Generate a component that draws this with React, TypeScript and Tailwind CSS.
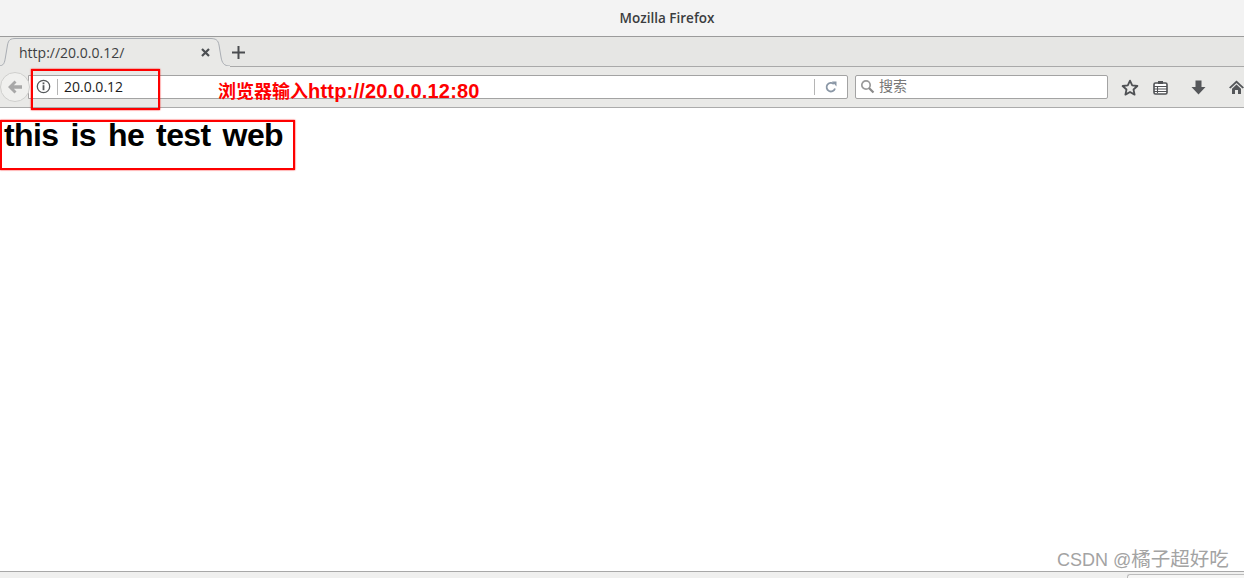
import React from "react";

const sans = "font-['Liberation_Sans','Noto_Sans_CJK_SC',sans-serif]";
const ui = "font-['Open_Sans','Noto_Sans_CJK_SC',sans-serif]";

function Tab() {
  return (
    <div className="relative w-[232px] h-[30px] ml-[-2px] shrink-0">
      <svg className="absolute inset-0" width="232" height="30" viewBox="0 0 232 30" fill="none">
        <path d="M0 29 C6 29 6.5 26 7.5 20 L9.5 8 C10.5 3 12 1.5 18 1.5 L212 1.5 C218 1.5 220 3 221 8 L223 20 C224 26 226 29 232 29" fill="#e9e9e7" stroke="#a9adb3" strokeWidth="1" />
        <rect x="0" y="29" width="232" height="1" fill="#e9e9e7" />
      </svg>
      <div className={`absolute left-[21px] top-[7px] text-[14px] leading-[18px] text-[#3d3f42] ${ui}`}>http://20.0.0.12/</div>
      <svg className="absolute left-[203px] top-[11px]" width="9" height="9" viewBox="0 0 9 9">
        <path d="M1 1 L8 8 M8 1 L1 8" stroke="#4c4f52" strokeWidth="2.2" />
      </svg>
    </div>
  );
}

export default function App() {
  return (
    <div className={`relative w-[1244px] h-[578px] overflow-hidden flex flex-col bg-white ${sans}`}>
      <div className="h-[36px] shrink-0 bg-[#f3f3f3] flex items-center justify-center pl-[90px]">
        <span className={`text-[13.5px] font-semibold text-[#3b3d3f] ${ui}`}>Mozilla Firefox</span>
      </div>
      <div className="h-[31px] shrink-0 border-t border-[#9b9b9b] bg-[#e6e6e4] flex items-start relative">
        <Tab />
        <svg className="ml-[2px] mt-[9px]" width="13" height="13" viewBox="0 0 13 13">
          <path d="M6.5 0 V13 M0 6.5 H13" stroke="#4a4c4f" strokeWidth="2" />
        </svg>
        <div className="absolute left-[230px] right-0 bottom-0 h-px bg-[#a9a9a9]" />
      </div>
      <div className="h-[41px] shrink-0 bg-[#e9e9e7] border-b border-[#ababab] flex items-center relative">
        <div className="w-[30px] h-[30px] shrink-0 rounded-full border border-[#cfcfcd] bg-[#f0f0ee] flex items-center justify-center mt-[-1px] z-10">
          <svg width="16" height="14" viewBox="0 0 16 14">
            <path d="M7.5 0.5 L1 7 L7.5 13.5 L9.5 11.5 L6.8 8.8 H15 V5.2 H6.8 L9.5 2.5 Z" fill="#a8a8a8" />
          </svg>
        </div>
        <div className="ml-[-2px] w-[820px] h-[24px] shrink-0 bg-white border border-[#a3a3a3] rounded-r-[2px] flex items-center mt-[-1px]">
          <svg className="ml-[7px] shrink-0" width="15" height="15" viewBox="0 0 15 15" fill="none">
            <circle cx="7.5" cy="7.5" r="6.2" stroke="#55585b" strokeWidth="1.3" />
            <rect x="6.6" y="3.4" width="1.8" height="1.9" fill="#55585b" />
            <rect x="6.6" y="6.2" width="1.8" height="5" fill="#55585b" />
          </svg>
          <div className="w-px h-[16px] bg-[#b5b5b5] ml-[6px]" />
          <span className={`ml-[6px] text-[14px] text-[#1b1b1b] ${ui}`}>20.0.0.12</span>
          <div className="flex-1" />
          <div className="w-px h-[16px] bg-[#b5b5b5]" />
          <svg className="mx-[10px] shrink-0" width="12" height="12" viewBox="0 0 12 12" fill="none">
            <path d="M10 7.5 A4.3 4.3 0 1 1 8.8 3" stroke="#8a97a6" strokeWidth="1.8" />
            <path d="M7 0.5 L11.5 0.5 L11.5 5.5 Z" fill="#8a97a6" />
          </svg>
        </div>
        <div className="ml-[7px] w-[253px] h-[24px] shrink-0 bg-white border border-[#a3a3a3] rounded-[2px] flex items-center mt-[-1px]">
          <svg className="ml-[4px] shrink-0" width="15" height="15" viewBox="0 0 15 15" fill="none">
            <circle cx="6" cy="6" r="4.2" stroke="#9a9a9a" strokeWidth="1.7" />
            <path d="M9 9 L13.5 13.5" stroke="#8a8a8a" strokeWidth="2.2" />
          </svg>
          <span className="ml-[4px] text-[14px] text-[#777]">搜索</span>
        </div>
        <svg className="ml-[13px] shrink-0" width="18" height="17" viewBox="0 0 18 17" fill="none">
          <path d="M9 1.6 L11.2 6.4 L16.4 7 L12.5 10.5 L13.6 15.6 L9 13 L4.4 15.6 L5.5 10.5 L1.6 7 L6.8 6.4 Z" stroke="#4f5154" strokeWidth="1.8" strokeLinejoin="round" />
        </svg>
        <div className="ml-[7px] w-px h-[18px] bg-[#cfcfcd]" />
        <svg className="ml-[7px] shrink-0" width="15" height="15" viewBox="0 0 15 15" fill="none">
          <rect x="1" y="3" width="13" height="11" rx="1.5" fill="#fff" stroke="#4f5154" strokeWidth="1.6" />
          <rect x="5" y="1" width="5" height="3" fill="#4f5154" />
          <path d="M1 6.5 H14 M1 9 H14 M1 11.5 H14 M4.5 6 V13" stroke="#4f5154" strokeWidth="1.1" />
        </svg>
        <svg className="ml-[23px] shrink-0" width="15" height="15" viewBox="0 0 15 15">
          <path d="M4.5 0.5 H10.5 V7 H14.5 L7.5 14.5 L0.5 7 H4.5 Z" fill="#55575a" />
        </svg>
        <svg className="ml-[23px] shrink-0" width="15" height="14" viewBox="0 0 15 14">
          <path d="M7.5 0.5 L15 7.5 L13.5 8.5 L7.5 3 L1.5 8.5 L0 7.5 Z M3 8.8 L7.5 4.6 L12 8.8 V14 H9 V10 H6 V14 H3 Z" fill="#55575a" />
        </svg>
      </div>
      <main className="flex-1 min-h-0 pl-[4px]">
        <h1 className="mt-[9px] text-[32px] leading-[36px] font-bold text-black tracking-[-0.6px] [word-spacing:3.7px] font-['Liberation_Sans',sans-serif]">
          this is he test web
        </h1>
      </main>
      <div className="h-[7px] shrink-0 border-t border-[#a8a8a8] bg-[#f0f0ef] relative">
        <div className="absolute left-[1127px] top-[2px] right-0 h-[6px] bg-[#f6f6f5] border-t border-l border-[#bcbcbc] rounded-tl-[3px]" />
      </div>

      <div className="absolute left-[31px] top-[69px] w-[129px] h-[41px] border-2 border-[#fe0000] shadow-[0_0_1.5px_#fe0000]" />
      <div className="absolute left-0 top-[120px] w-[295px] h-[50px] border-2 border-[#fe0000] shadow-[0_0_1.5px_#fe0000]" />
      <div className="absolute left-[218px] top-[80px] text-[18px] leading-[22px] font-bold text-[#fe0000] whitespace-nowrap">
        浏览器输入<span className="text-[20px] tracking-[0.2px]">http://20.0.0.12:80</span>
      </div>
      <div className="absolute left-[1057px] top-[547px] text-[18px] leading-[24px] text-[#a3a3a3] whitespace-nowrap">
        CSDN @<span className="text-[19.5px]">橘子超好吃</span>
      </div>
    </div>
  );
}
